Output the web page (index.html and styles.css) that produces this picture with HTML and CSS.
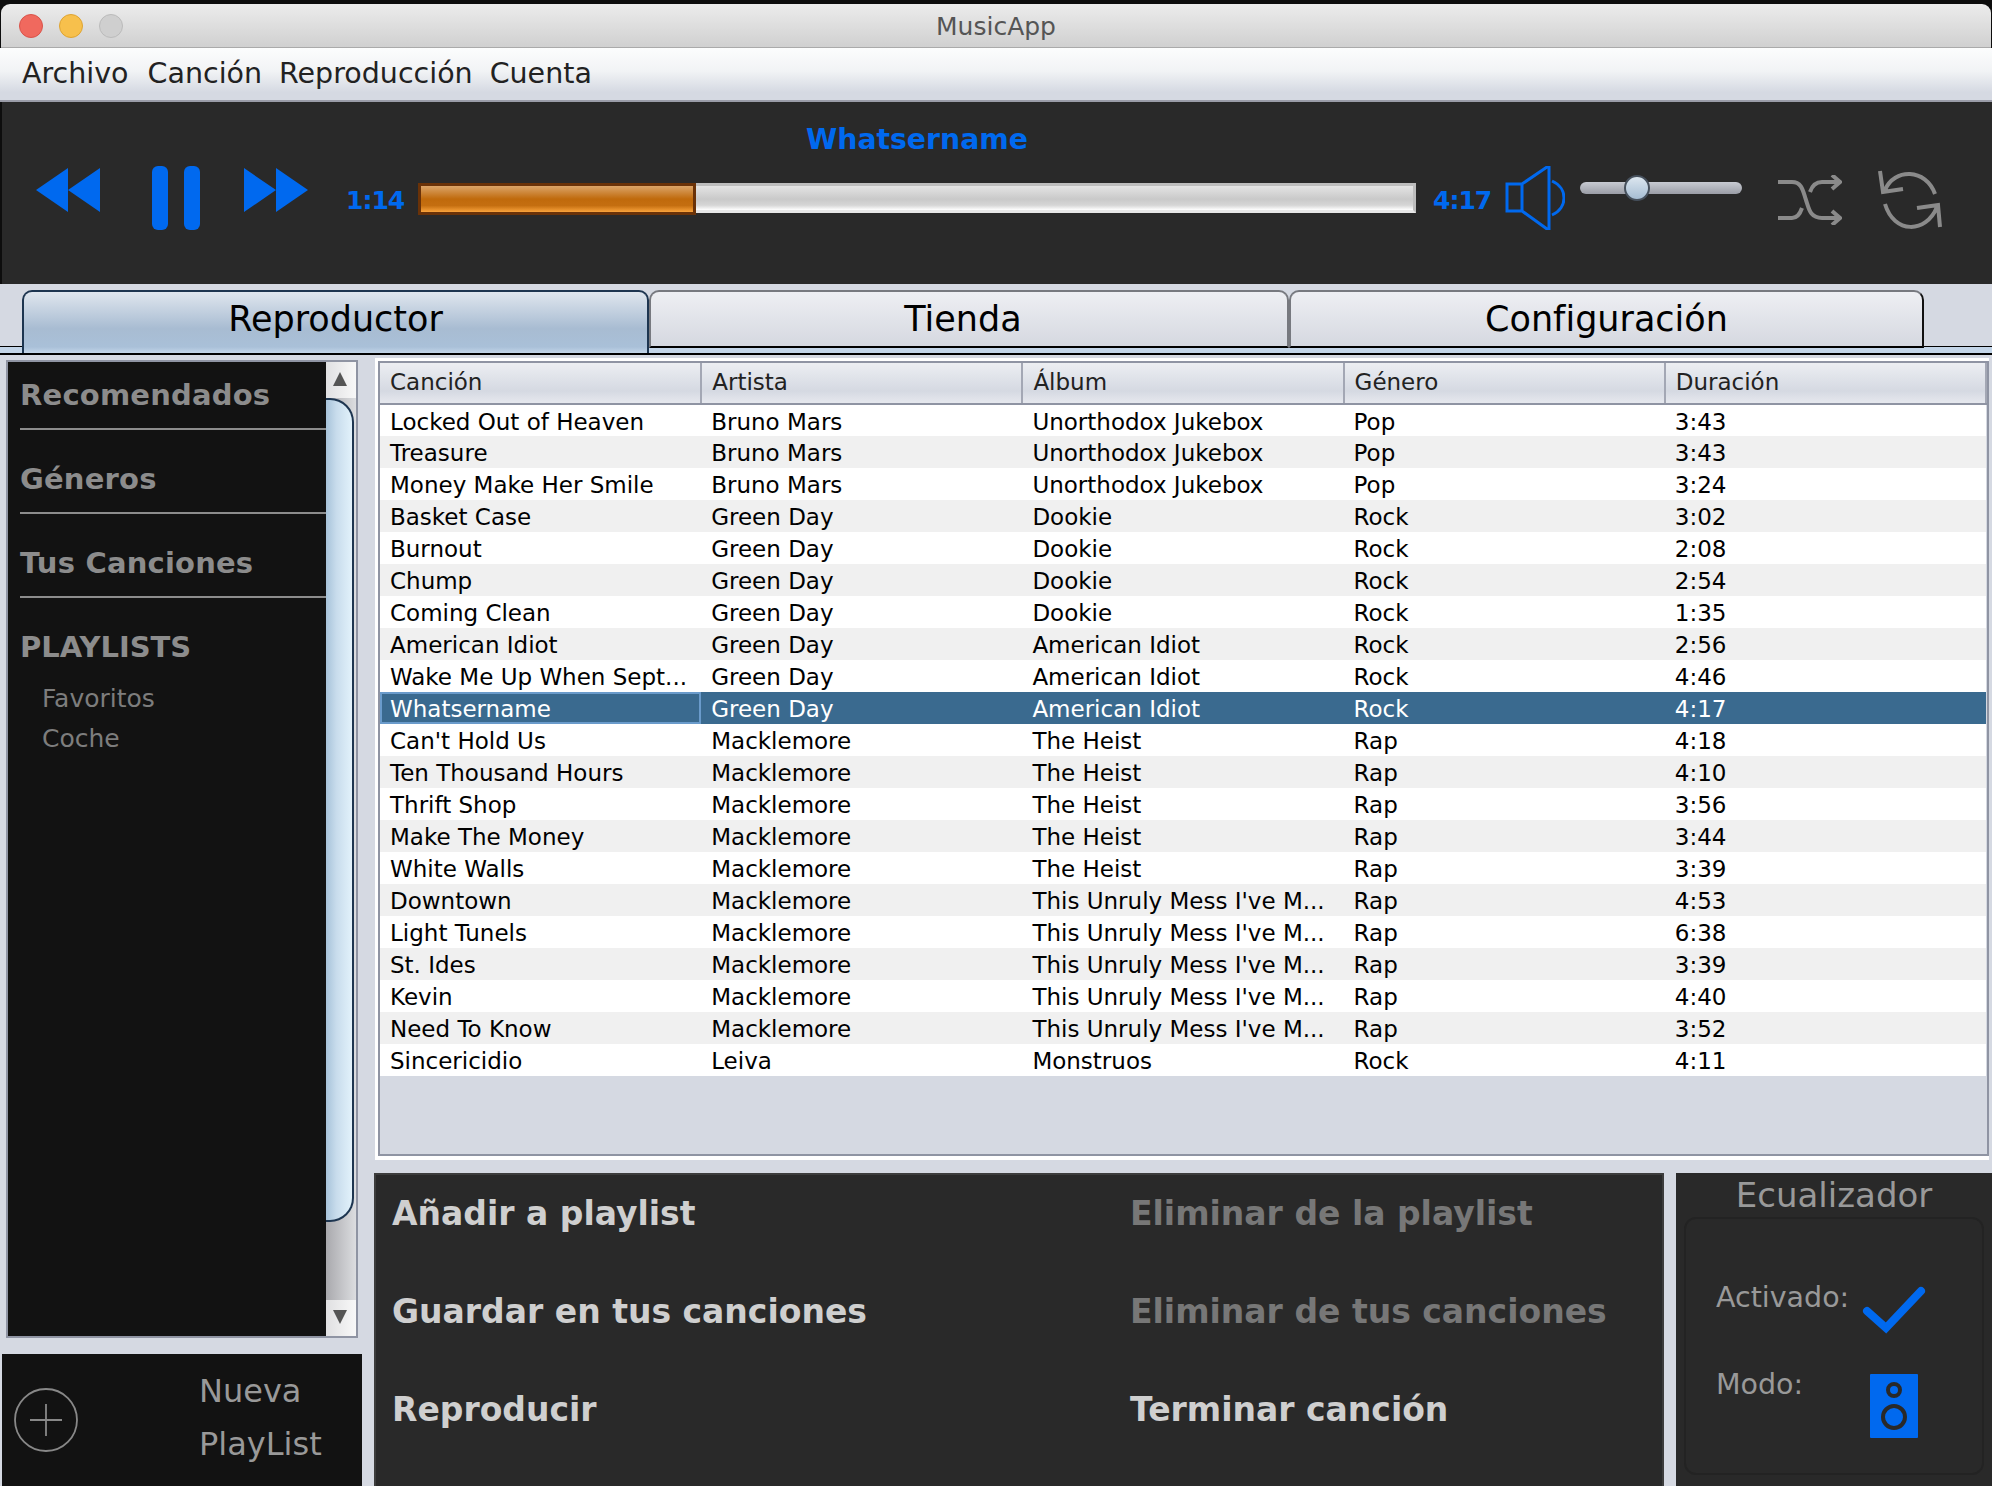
FILE: index.html
```html
<!DOCTYPE html>
<html lang="es">
<head>
    <meta charset="UTF-8">
    <title>MusicApp</title>
    <link rel="stylesheet" href="styles.css">
</head>
<body>
<div class="window">
    <div class="titlebar">
        <span class="light red"></span>
        <span class="light yellow"></span>
        <span class="light gray"></span>
        <span class="title">MusicApp</span>
    </div>
    <div class="menubar">
        <span>Archivo</span>
        <span>Canción</span>
        <span>Reproducción</span>
        <span>Cuenta</span>
    </div>

    <div class="player">
        <svg class="ic-rew" viewBox="0 0 64 44"><path d="M0 22 32 0V44ZM32 22 64 0V44Z"/></svg>
        <div class="ic-pause"><i></i><i></i></div>
        <svg class="ic-fwd" viewBox="0 0 64 44"><path d="M0 0 32 22 0 44ZM32 0 64 22 32 44Z"/></svg>
        <span class="time time-now">1:14</span>
        <div class="seek">
            <div class="now-title">Whatsername</div>
            <div class="bar"><div class="bar-fill"></div></div>
        </div>
        <span class="time time-end">4:17</span>
        <svg class="ic-vol" viewBox="0 0 60 64"><path d="M2 18H17V45H2ZM17 18 42 1H44V63H42L17 45M47 15C63 22 63 42 47 49"/></svg>
        <div class="slider"><div class="thumb"></div></div>
        <svg class="ic-shuffle" viewBox="0 0 64 50"><path d="M0 7H14C24 7 25 16 28 25 31 34 32 43 44 43H62M0 43H14C19 43 22 39 24 33M32 17C34 11 38 7 44 7H62M54 0 62 7 54 14M54 36 62 43 54 50"/></svg>
        <svg class="ic-repeat" viewBox="0 0 64 60"><path d="M2 1 5 22 25 19M7 20C16 -2 48 -2 57 24M39 38 60 35 62 57M59 37C48 64 16 64 7 34"/></svg>
    </div>

    <div class="tabs">
        <div class="tab active">Reproductor</div>
        <div class="tab t2">Tienda</div>
        <div class="tab t3">Configuración</div>
    </div>

    <div class="content">
        <div class="left">
            <div class="side">
                <div class="side-list">
                    <div class="side-item">Recomendados</div>
                    <div class="side-item">Géneros</div>
                    <div class="side-item">Tus Canciones</div>
                    <div class="side-head">PLAYLISTS</div>
                    <div class="side-sub">Favoritos</div>
                    <div class="side-sub">Coche</div>
                </div>
                <div class="scroll">
                    <div class="scroll-btn up"><b></b></div>
                    <div class="scroll-thumb"></div>
                    <div class="scroll-rest"></div>
                    <div class="scroll-btn down"><b></b></div>
                </div>
            </div>
            <div class="newlist">
                <svg class="ic-plus" viewBox="0 0 64 64"><circle cx="32" cy="32" r="31"/><path d="M32 16V48M16 32H48"/></svg>
                <div class="newlist-text">Nueva<br>PlayList</div>
            </div>
        </div>

        <div class="right">
            <div class="table-wrap">
                <table class="songs">
                    <thead>
                        <tr><th>Canción</th><th>Artista</th><th>Álbum</th><th>Género</th><th>Duración</th></tr>
                    </thead>
                    <tbody>
                        <tr><td>Locked Out of Heaven</td><td>Bruno Mars</td><td>Unorthodox Jukebox</td><td>Pop</td><td>3:43</td></tr>
                        <tr><td>Treasure</td><td>Bruno Mars</td><td>Unorthodox Jukebox</td><td>Pop</td><td>3:43</td></tr>
                        <tr><td>Money Make Her Smile</td><td>Bruno Mars</td><td>Unorthodox Jukebox</td><td>Pop</td><td>3:24</td></tr>
                        <tr><td>Basket Case</td><td>Green Day</td><td>Dookie</td><td>Rock</td><td>3:02</td></tr>
                        <tr><td>Burnout</td><td>Green Day</td><td>Dookie</td><td>Rock</td><td>2:08</td></tr>
                        <tr><td>Chump</td><td>Green Day</td><td>Dookie</td><td>Rock</td><td>2:54</td></tr>
                        <tr><td>Coming Clean</td><td>Green Day</td><td>Dookie</td><td>Rock</td><td>1:35</td></tr>
                        <tr><td>American Idiot</td><td>Green Day</td><td>American Idiot</td><td>Rock</td><td>2:56</td></tr>
                        <tr><td>Wake Me Up When Sept...</td><td>Green Day</td><td>American Idiot</td><td>Rock</td><td>4:46</td></tr>
                        <tr class="selected"><td>Whatsername</td><td>Green Day</td><td>American Idiot</td><td>Rock</td><td>4:17</td></tr>
                        <tr><td>Can't Hold Us</td><td>Macklemore</td><td>The Heist</td><td>Rap</td><td>4:18</td></tr>
                        <tr><td>Ten Thousand Hours</td><td>Macklemore</td><td>The Heist</td><td>Rap</td><td>4:10</td></tr>
                        <tr><td>Thrift Shop</td><td>Macklemore</td><td>The Heist</td><td>Rap</td><td>3:56</td></tr>
                        <tr><td>Make The Money</td><td>Macklemore</td><td>The Heist</td><td>Rap</td><td>3:44</td></tr>
                        <tr><td>White Walls</td><td>Macklemore</td><td>The Heist</td><td>Rap</td><td>3:39</td></tr>
                        <tr><td>Downtown</td><td>Macklemore</td><td>This Unruly Mess I've M...</td><td>Rap</td><td>4:53</td></tr>
                        <tr><td>Light Tunels</td><td>Macklemore</td><td>This Unruly Mess I've M...</td><td>Rap</td><td>6:38</td></tr>
                        <tr><td>St. Ides</td><td>Macklemore</td><td>This Unruly Mess I've M...</td><td>Rap</td><td>3:39</td></tr>
                        <tr><td>Kevin</td><td>Macklemore</td><td>This Unruly Mess I've M...</td><td>Rap</td><td>4:40</td></tr>
                        <tr><td>Need To Know</td><td>Macklemore</td><td>This Unruly Mess I've M...</td><td>Rap</td><td>3:52</td></tr>
                        <tr><td>Sincericidio</td><td>Leiva</td><td>Monstruos</td><td>Rock</td><td>4:11</td></tr>
                    </tbody>
                </table>
            </div>

            <div class="bottom">
                <div class="actions">
                    <div class="action">Añadir a playlist</div>
                    <div class="action off">Eliminar de la playlist</div>
                    <div class="action">Guardar en tus canciones</div>
                    <div class="action off">Eliminar de tus canciones</div>
                    <div class="action">Reproducir</div>
                    <div class="action">Terminar canción</div>
                </div>
                <div class="eq">
                    <div class="eq-title">Ecualizador</div>
                    <div class="eq-box">
                        <div class="eq-row">
                            <span>Activado:</span>
                            <svg class="ic-check" viewBox="0 0 64 50"><path d="M5 26 24 43 59 6"/></svg>
                        </div>
                        <div class="eq-row">
                            <span>Modo:</span>
                            <svg class="ic-speaker" viewBox="0 0 48 64"><rect width="48" height="64" rx="1"/><circle cx="24" cy="16" r="6"/><circle cx="24" cy="43" r="11"/></svg>
                        </div>
                    </div>
                </div>
            </div>
        </div>
    </div>
</div>
</body>
</html>
```

FILE: styles.css
```css
* {
    box-sizing: border-box;
}
html, body {
    margin: 0;
    height: 100%;
    overflow: hidden;
    background: #0d0d0d;
}
body {
    font-family: "DejaVu Sans", sans-serif;
    color: #000;
}
.window {
    width: 1992px;
    height: 1486px;
    padding-top: 4px;
    display: flex;
    flex-direction: column;
}

/* title + menu */
.titlebar {
    height: 44px;
    margin: 0 1px;
    border-radius: 9px 9px 0 0;
    border-bottom: 1px solid #aaa;
    background: linear-gradient(#ececec, #d0d0d0);
    display: flex;
    align-items: center;
    padding-left: 18px;
    gap: 16px;
    position: relative;
}
.light {
    width: 24px;
    height: 24px;
    border-radius: 50%;
    border: 1px solid #bbb;
}
.red { background: #f0695e; border-color: #d9534a; }
.yellow { background: #f7c04c; border-color: #dea432; }
.gray { background: #cfcfcf; }
.title {
    position: absolute;
    left: 0;
    right: 0;
    top: 8px;
    text-align: center;
    font-size: 25px;
    color: #555;
}
.menubar {
    height: 54px;
    border-bottom: 2px solid #9a9ca8;
    background: linear-gradient(#fcfdfd, #f1f3f5 45%, #d5d9e2 85%);
    display: flex;
    align-items: center;
    gap: 17px;
    padding: 0 0 1px 22px;
    font-size: 28.5px;
    color: #222;
}
.menubar span:first-child {
    margin-right: 2px;
}

/* player */
.player {
    height: 182px;
    background: #292929;
    margin-left: 2px;
    display: flex;
    align-items: flex-start;
    color: #0069ef;
}
.player svg { flex: none; }
.ic-rew, .ic-fwd {
    width: 64px;
    height: 44px;
    margin-top: 66px;
    fill: #0069ef;
}
.ic-rew { margin-left: 34px; }
.ic-pause {
    margin: 64px 44px 0 52px;
    display: flex;
    gap: 16px;
}
.ic-pause i {
    width: 16px;
    height: 64px;
    border-radius: 6px;
    background: #0069ef;
}
.time {
    font-size: 25px;
    font-weight: bold;
    margin-top: 84px;
    letter-spacing: -1px;
    width: 58px;
}
.time-now { margin-left: 38px; margin-right: 14px; }
.time-end { margin-left: 17px; }
.seek {
    width: 998px;
}
.now-title {
    height: 78px;
    padding-top: 21px;
    text-align: center;
    font-size: 28.3px;
    font-weight: bold;
}
.bar {
    height: 30px;
    margin-top: 3px;
    border: 3px solid #bdbdbd;
    border-bottom-color: #e6e6e6;
    background: linear-gradient(#e4e4e4, #c9c9c9 55%, #d6d6d6 80%, #fff);
}
.bar-fill {
    width: 278px;
    height: 32px;
    margin: -3px 0 0 -3px;
    border: 3px solid #6a3208;
    background: linear-gradient(#dba468, #c06a0c 50%, #c46e10 75%, #f9a33c);
}
.ic-vol {
    width: 60px;
    height: 64px;
    margin: 64px 0 0 14px;
    fill: none;
    stroke: #0069ef;
    stroke-width: 3;
}
.slider {
    width: 162px;
    height: 12px;
    margin: 80px 0 0 15px;
    border-radius: 6px;
    background: linear-gradient(#c8cbd2, #9a9da6);
    position: relative;
}
.thumb {
    position: absolute;
    left: 44px;
    top: -7px;
    width: 26px;
    height: 26px;
    border-radius: 50%;
    border: 2px solid #46505c;
    background: linear-gradient(#dce6ef, #a6bdd3);
}
.ic-shuffle {
    width: 64px;
    height: 50px;
    margin: 73px 0 0 36px;
}
.ic-repeat {
    width: 64px;
    height: 60px;
    margin: 68px 0 0 36px;
}
.ic-shuffle, .ic-repeat {
    fill: none;
    stroke: #8a8a8a;
    stroke-width: 4;
}

/* tabs */
.tabs {
    height: 71px;
    padding: 6px 67px 0 22px;
    display: flex;
    background: linear-gradient(#d5d9e2 62px, #000 62px, #000 63px, #c3d5e8 63px, #c3d5e8 69px, #000 69px);
}
.tab {
    height: 58px;
    width: 640px;
    border: 2px solid #77797f;
    border-bottom: 2px solid #000;
    border-radius: 10px 10px 0 0;
    background: linear-gradient(#eeeff3, #d5d8e0);
    text-align: center;
    font-size: 35px;
    line-height: 55px;
}
.tab.active {
    width: 627px;
    border-color: #1d3550;
    border-bottom: none;
    height: 63px;
    background: linear-gradient(#dfe6ee, #a8bcd2 60%, #a9c0d8 90%, #c3d5e8);
}
.tab.t2 { padding-right: 12px; }
.tab.t3 { width: 635px; border-right-color: #111; }

/* main */
.content {
    flex: 1;
    min-height: 0;
    background: #d5d9e2;
    display: flex;
}
.left {
    width: 374px;
    display: flex;
    flex-direction: column;
}
.side {
    height: 978px;
    width: 352px;
    margin: 5px 0 0 6px;
    border: 2px solid #8f94a3;
    display: flex;
}
.side-list {
    flex: 1;
    background: #121212;
    padding-left: 12px;
    color: #8c8c8c;
}
.side-item {
    height: 84px;
    padding-top: 24px;
    border-bottom: 2px solid #8c8c8c;
    font-size: 29px;
    letter-spacing: .2px;
    font-weight: bold;
    line-height: 50px;
}
.side-item:first-child {
    height: 68px;
    padding-top: 8px;
}
.side-head {
    padding-top: 24px;
    height: 81px;
    font-size: 29px;
    font-weight: bold;
    line-height: 50px;
}
.side-sub {
    height: 40px;
    padding-left: 22px;
    font-size: 25px;
    line-height: 40px;
    color: #7d7d7d;
}
.scroll {
    width: 30px;
    display: flex;
    flex-direction: column;
    background: linear-gradient(90deg, #a9a9ad, #dcdde0);
}
.scroll-btn {
    height: 36px;
    flex: none;
    background: linear-gradient(90deg, #e0e0e2, #f8f8f8);
    position: relative;
}
.scroll-btn b {
    position: absolute;
    left: 7px;
    top: 10px;
    border-left: 7px solid transparent;
    border-right: 7px solid transparent;
    border-bottom: 14px solid #555;
}
.scroll-btn.down b {
    border-bottom: none;
    border-top: 14px solid #555;
}
.scroll-thumb {
    height: 824px;
    margin-right: 2px;
    border: 2px solid #1d3550;
    border-left: none;
    border-radius: 0 24px 24px 0;
    background: linear-gradient(90deg, #a7c3da, #c8dcec 40%, #e2f2fb);
}
.scroll-rest {
    flex: 1;
    border-radius: 0 0 16px 0;
}
.newlist {
    flex: 1;
    margin: 16px 12px 0 2px;
    background: #121212;
    display: flex;
    padding-top: 34px;
}
.ic-plus {
    width: 64px;
    height: 64px;
    margin: 0 0 0 12px;
    fill: none;
    stroke: #888;
    stroke-width: 1.8;
}
.newlist-text {
    margin: -23px 0 0 121px;
    font-size: 32px;
    line-height: 53px;
    color: #999;
}
.right {
    flex: 1;
    min-width: 0;
    display: flex;
    flex-direction: column;
}
.table-wrap {
    height: 802px;
    margin: 3px 3px 0 1px;
    border: 3px solid #fff;
    border-bottom-width: 4px;
    border-right: none;
    background: #d5d9e2;
    box-shadow: inset 0 0 0 2px #8f94a3;
    padding: 2px;
}
.songs {
    width: 100%;
    table-layout: fixed;
    border-collapse: collapse;
    font-size: 23px;
}
.songs th {
    height: 41px;
    text-align: left;
    font-weight: normal;
    padding: 0 0 3px 10px;
    background: linear-gradient(#eceef2, #d5d9e2 70%, #e6e8ee);
    border-right: 2px solid #a3a7b4;
    border-bottom: 2px solid #8f94a3;
    color: #222;
}
.songs td {
    height: 32px;
    padding: 2px 0 0 10px;
    white-space: nowrap;
    background: #fff;
}
.songs tbody tr:nth-child(even) td {
    background: #f0f0f0;
}
.songs tbody tr.selected td {
    background: #3a6a8f;
    color: #fff;
}
.songs tr.selected td:first-child {
    outline: 2px solid #6a9bcb;
    outline-offset: -2px;
}
.bottom {
    flex: 1;
    display: flex;
    margin-top: 13px;
    min-height: 0;
}
.actions {
    width: 1290px;
    background: #292929;
    border: 2px solid #3c3c3c;
    border-bottom: none;
    display: grid;
    grid-template-columns: 738px 1fr;
    grid-auto-rows: 97.8px;
    padding: 14px 0 0 16px;
    font-size: 33px;
    font-weight: bold;
    color: #cfcfcf;
}
.action {
    line-height: 50px;
}
.action.off {
    color: #777;
}
.eq {
    flex: 1;
    margin-left: 12px;
    background: #292929;
    padding: 0 8px 11px;
    display: flex;
    flex-direction: column;
    color: #999;
}
.eq-title {
    height: 44px;
    text-align: center;
    font-size: 34px;
    line-height: 44px;
}
.eq-box {
    flex: 1;
    border: 2px solid #232323;
    border-radius: 12px;
    padding: 59px 0 0 30px;
    font-size: 28.5px;
}
.eq-row {
    display: flex;
    height: 87px;
    align-items: flex-start;
}
.eq-row span {
    width: 146px;
    line-height: 40px;
}
.ic-check {
    width: 64px;
    height: 50px;
    margin-top: 7px;
    fill: none;
    stroke: #0069ef;
    stroke-width: 8;
    stroke-linecap: round;
}
.ic-speaker {
    width: 48px;
    height: 64px;
    margin: 9px 0 0 8px;
    fill: #0069ef;
}
.ic-speaker circle {
    fill: #0069ef;
    stroke: #292929;
    stroke-width: 4;
}
```
